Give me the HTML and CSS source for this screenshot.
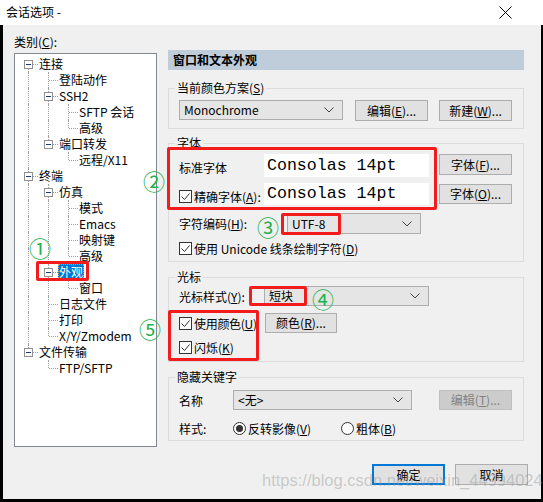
FILE: index.html
```html
<!DOCTYPE html>
<html lang="zh-CN">
<head>
<meta charset="utf-8">
<title>会话选项</title>
<link rel="stylesheet" href="styles.css">
</head>
<body>
<div class="win">
  <div class="titlebar">
    <span class="title">会话选项 -</span>
    <svg class="close" width="13" height="13" viewBox="0 0 13 13"><path d="M0.5 0.5 L12.5 12.5 M12.5 0.5 L0.5 12.5" stroke="#000" stroke-width="1" fill="none"/></svg>
  </div>
  <div class="body">
    <div class="left">
      <div class="cat">类别(<u>C</u>):</div>
      <div class="tree">
        <div class="row"><span class="g f"><i class="bx"></i></span><span class="tx">连接</span></div>
        <div class="row"><span class="g v"></span><span class="g t"></span><span class="tx">登陆动作</span></div>
        <div class="row"><span class="g v"></span><span class="g t"><i class="bx"></i></span><span class="tx">SSH2</span></div>
        <div class="row"><span class="g v"></span><span class="g v"></span><span class="g t"></span><span class="tx">SFTP 会话</span></div>
        <div class="row"><span class="g v"></span><span class="g v"></span><span class="g l"></span><span class="tx">高级</span></div>
        <div class="row"><span class="g v"></span><span class="g l"><i class="bx"></i></span><span class="tx">端口转发</span></div>
        <div class="row"><span class="g v"></span><span class="g"></span><span class="g l"></span><span class="tx">远程/X11</span></div>
        <div class="row"><span class="g t"><i class="bx"></i></span><span class="tx">终端</span></div>
        <div class="row"><span class="g v"></span><span class="g t"><i class="bx"></i></span><span class="tx">仿真</span></div>
        <div class="row"><span class="g v"></span><span class="g v"></span><span class="g t"></span><span class="tx">模式</span></div>
        <div class="row"><span class="g v"></span><span class="g v"></span><span class="g t"></span><span class="tx">Emacs</span></div>
        <div class="row"><span class="g v"></span><span class="g v"></span><span class="g t"></span><span class="tx">映射键</span></div>
        <div class="row"><span class="g v"></span><span class="g v"></span><span class="g l"></span><span class="tx">高级</span></div>
        <div class="row"><span class="g v"></span><span class="g t"><i class="bx"></i></span><span class="tx sel">外观</span></div>
        <div class="row"><span class="g v"></span><span class="g v"></span><span class="g l"></span><span class="tx">窗口</span></div>
        <div class="row"><span class="g v"></span><span class="g t"></span><span class="tx">日志文件</span></div>
        <div class="row"><span class="g v"></span><span class="g t"></span><span class="tx">打印</span></div>
        <div class="row"><span class="g v"></span><span class="g l"></span><span class="tx">X/Y/Zmodem</span></div>
        <div class="row"><span class="g l"><i class="bx"></i></span><span class="tx">文件传输</span></div>
        <div class="row"><span class="g"></span><span class="g l"></span><span class="tx">FTP/SFTP</span></div>
      </div>
    </div>

    <div class="right">
      <div class="hdr">窗口和文本外观</div>

      <fieldset class="grp g1">
        <legend>当前颜色方案(<u>S</u>)</legend>
        <div class="r1">
          <div class="sel-box w164"><span>Monochrome</span><svg class="chev" width="10" height="6" viewBox="0 0 10 6"><path d="M0.5 0.5 L5 5 L9.5 0.5" stroke="#444" fill="none"/></svg></div>
          <div class="btn">编辑(<u>E</u>)...</div>
          <div class="btn">新建(<u>W</u>)...</div>
        </div>
      </fieldset>

      <fieldset class="grp g2">
        <legend>字体</legend>
        <div class="frow fr1">
          <span class="lab">标准字体</span>
          <div class="field">Consolas 14pt</div>
          <div class="btn">字体(<u>F</u>)...</div>
        </div>
        <div class="frow fr2">
          <span class="lab chk"><span class="cb"><svg width="11" height="11" viewBox="0 0 11 11"><path d="M1.5 5.5 L4.5 8.5 L9.5 2.5" stroke="#333" fill="none"/></svg></span>精确字体(<u>A</u>):</span>
          <div class="field">Consolas 14pt</div>
          <div class="btn">字体(<u>O</u>)...</div>
        </div>
        <div class="frow fr3">
          <span class="lab wide">字符编码(<u>H</u>):</span>
          <div class="sel-box w133"><span>UTF-8</span><svg class="chev" width="10" height="6" viewBox="0 0 10 6"><path d="M0.5 0.5 L5 5 L9.5 0.5" stroke="#444" fill="none"/></svg></div>
        </div>
        <div class="frow fr4">
          <span class="chk"><span class="cb"><svg width="11" height="11" viewBox="0 0 11 11"><path d="M1.5 5.5 L4.5 8.5 L9.5 2.5" stroke="#333" fill="none"/></svg></span>使用 Unicode 线条绘制字符(<u>D</u>)</span>
        </div>
      </fieldset>

      <fieldset class="grp g3">
        <legend>光标</legend>
        <div class="frow cr1">
          <span class="lab">光标样式(<u>Y</u>):</span>
          <div class="sel-box w165"><span>短块</span><svg class="chev" width="10" height="6" viewBox="0 0 10 6"><path d="M0.5 0.5 L5 5 L9.5 0.5" stroke="#444" fill="none"/></svg></div>
        </div>
        <div class="frow cr2">
          <span class="lab chk"><span class="cb"><svg width="11" height="11" viewBox="0 0 11 11"><path d="M1.5 5.5 L4.5 8.5 L9.5 2.5" stroke="#333" fill="none"/></svg></span><span class="tight">使用颜色(<u>U</u>)</span></span>
          <div class="btn w72">颜色(<u>R</u>)...</div>
        </div>
        <div class="frow cr3">
          <span class="chk"><span class="cb"><svg width="11" height="11" viewBox="0 0 11 11"><path d="M1.5 5.5 L4.5 8.5 L9.5 2.5" stroke="#333" fill="none"/></svg></span>闪烁(<u>K</u>)</span>
        </div>
      </fieldset>

      <fieldset class="grp g4">
        <legend>隐藏关键字</legend>
        <div class="frow hr1">
          <span class="lab short">名称</span>
          <div class="sel-box w179"><span>&lt;无&gt;</span><svg class="chev" width="10" height="6" viewBox="0 0 10 6"><path d="M0.5 0.5 L5 5 L9.5 0.5" stroke="#444" fill="none"/></svg></div>
          <div class="btn dis">编辑(<u>T</u>)...</div>
        </div>
        <div class="frow hr2">
          <span class="lab short">样式:</span>
          <span class="radio on"><span class="rb"></span>反转影像(<u>V</u>)</span>
          <span class="radio"><span class="rb"></span>粗体(<u>B</u>)</span>
        </div>
      </fieldset>

      <div class="actions">
        <div class="btn def">确定</div>
        <div class="btn">取消</div>
      </div>
    </div>
  </div>

  <div class="mark rb1"></div>
  <div class="mark rb2"></div>
  <div class="mark rb3"></div>
  <div class="mark rb4"></div>
  <div class="mark rb5"></div>
  <span class="num n1">①</span>
  <span class="num n2">②</span>
  <span class="num n3">③</span>
  <span class="num n4">④</span>
  <span class="num n5">⑤</span>
  <span class="wm">https://blog.csdn.net/weixin_44994024</span>
</div>
</body>
</html>
```
FILE: styles.css
```css
* { box-sizing: border-box; }
html, body { margin: 0; padding: 0; }
body {
  width: 543px;
  height: 502px;
  overflow: hidden;
  font-family: "Noto Sans CJK SC", "Microsoft YaHei", sans-serif;
  font-size: 12px;
  color: #000;
  background: #000;
}
u { text-decoration: underline; text-underline-offset: 1px; }

.win { position: relative; width: 543px; height: 502px; }

.titlebar {
  height: 25px;
  background: #fff;
  display: flex;
  align-items: center;
  padding: 0 31px 0 6px;
  justify-content: space-between;
}
.title { line-height: 16px; margin-top: -1px; }
.close { display: block; margin-top: -1px; }

.body {
  display: flex;
  height: 474px;
  margin: 0 2px 0 3px;
  background: #f0f0f0;
}

.left { padding: 9px 0 0 11px; width: 154px; flex: none; }
.cat { line-height: 16px; height: 16px; margin-bottom: 3px; }
.tree {
  width: 143px;
  height: 394px;
  border: 1px solid #828790;
  background: #fff;
  padding: 2px 0 0 3px;
}
.row { display: flex; height: 16px; line-height: 16px; white-space: nowrap; }
.g { position: relative; width: 20px; height: 16px; flex: none; }
.g.v::before, .g.t::before, .g.l::before, .g.f::before {
  content: "";
  position: absolute;
  left: 10px;
  top: 0;
  height: 16px;
  border-left: 1px dotted #a0a0a0;
}
.g.l::before { height: 8px; }
.g.f::before { top: 8px; height: 8px; }
.g.t::after, .g.l::after, .g.f::after {
  content: "";
  position: absolute;
  left: 11px;
  top: 8px;
  width: 9px;
  border-top: 1px dotted #a0a0a0;
}
.bx {
  position: absolute;
  left: 6px;
  top: 4px;
  width: 9px;
  height: 9px;
  border: 1px solid #919191;
  background: #fff;
  z-index: 1;
}
.bx::after {
  content: "";
  position: absolute;
  left: 1px;
  top: 3px;
  width: 5px;
  height: 1px;
  background: #1a3a7a;
}
.tx { margin-left: 1px; color: #000; }
.tx.sel { background: #0078d7; color: #fff; padding: 0 1px; margin-left: 0; outline: 1px dotted #e0a060; outline-offset: -1px; }

.right { width: 356px; margin-left: 11px; padding-top: 25px; flex: none; }
.hdr {
  height: 20px;
  background: #bfcddb;
  font-weight: bold;
  line-height: 20px;
  padding-left: 5px;
}

.grp {
  margin: 0;
  border: 1px solid #dcdcdc;
  padding: 0 10px;
  min-width: 0;
}
.grp legend {
  padding: 0 2px;
  margin-left: -4px;
  line-height: 16px;
  height: 16px;
}
.g1 { margin-top: 10px; padding-top: 4px; padding-bottom: 7px; }
.g2 { margin-top: 6px; padding-top: 3px; padding-bottom: 4px; }
.g3 { margin-top: 7px; padding-top: 1px; padding-bottom: 5px; }
.g4 { margin-top: 7px; padding-top: 5px; padding-bottom: 3px; }

.r1 { display: flex; align-items: flex-start; gap: 0; }
.r1 .btn:nth-child(2) { margin-left: 12px; }
.r1 .btn:nth-child(3) { margin-left: 11px; }

.sel-box {
  height: 20px;
  background: #e5e5e5;
  border: 1px solid #adadad;
  display: flex;
  align-items: center;
  justify-content: space-between;
  padding: 0 8px 0 4px;
  line-height: 16px;
}
.w164 { width: 164px; }
.w133 { width: 134px; height: 21px; }
.w165 { width: 165px; }
.w179 { width: 179px; }
.chev { display: block; }

.btn {
  width: 73px;
  height: 21px;
  background: #e1e1e1;
  border: 1px solid #adadad;
  display: flex;
  align-items: center;
  justify-content: center;
  line-height: 16px;
  flex: none;
}
.btn.w72 { width: 72px; height: 20px; }
.btn.dis { background: #cccccc; border-color: #bfbfbf; color: #838383; height: 20px; margin-left: 27px; }
.btn.def { border: 2px solid #0078d7; }

.frow { display: flex; align-items: center; }
.lab { width: 85px; flex: none; display: flex; align-items: center; }
.lab.wide { width: 108px; }
.lab.short { width: 54px; }
.fr1 { height: 23px; align-items: flex-start; }
.fr1 .lab { height: 23px; padding-top: 3px; }
.fr1 .btn { margin-left: 10px; }
.fr2 { height: 22px; margin-top: 6px; }
.fr2 .btn { margin-left: 10px; height: 20px; }
.fr2 .lab { padding-top: 4px; }
.fr3 { height: 21px; margin-top: 8px; }
.fr4 { height: 18px; margin-top: 5px; }

.field {
  width: 165px;
  height: 23px;
  background: #fff;
  font-family: "Liberation Mono", "DejaVu Sans Mono", monospace;
  font-size: 16.6px;
  line-height: 23px;
  padding-left: 3px;
  flex: none;
}
.fr2 .field { height: 22px; line-height: 22px; }

.chk { display: flex; align-items: center; white-space: nowrap; }
.cb {
  width: 13px;
  height: 13px;
  border: 1px solid #333;
  background: #fff;
  margin-right: 2px;
  display: flex;
  align-items: center;
  justify-content: center;
  flex: none;
}
.cb svg { display: block; }
.tight { letter-spacing: -0.3px; }

.cr1 { height: 20px; }
.cr2 { height: 20px; margin-top: 7px; }
.cr2 .lab { width: 86px; }
.cr3 { height: 18px; margin-top: 5px; }

.hr1 { height: 20px; }
.hr2 { height: 18px; margin-top: 9px; }
.radio { display: flex; align-items: center; white-space: nowrap; width: 108px; }
.rb {
  width: 13px;
  height: 13px;
  border: 1px solid #333;
  border-radius: 50%;
  background: #fff;
  margin-right: 2px;
  position: relative;
  flex: none;
}
.radio.on .rb::after {
  content: "";
  position: absolute;
  left: 2px;
  top: 2px;
  width: 7px;
  height: 7px;
  border-radius: 50%;
  background: #333;
}

.actions {
  display: flex;
  justify-content: flex-end;
  gap: 10px;
  margin-top: 23px;
  margin-right: -4px;
}

.mark {
  position: absolute;
  border: 3px solid #f21c1c;
  border-radius: 2px;
}
.rb1 { left: 36px; top: 261px; width: 53px; height: 20px; }
.rb2 { left: 167px; top: 147px; width: 270px; height: 63px; }
.rb3 { left: 281px; top: 213px; width: 60px; height: 22px; }
.rb4 { left: 249px; top: 286px; width: 58px; height: 20px; }
.rb5 { left: 168px; top: 310px; width: 91px; height: 51px; }

.num {
  position: absolute;
  color: #22b14c;
  font-size: 22px;
  line-height: 22px;
  font-family: "Noto Sans CJK SC", sans-serif;
}
.n1 { left: 29px; top: 236px; }
.n2 { left: 143px; top: 169px; }
.n3 { left: 257px; top: 215px; }
.n4 { left: 312px; top: 287px; }
.n5 { left: 139px; top: 317px; }

.wm {
  position: absolute;
  left: 262px;
  top: 470px;
  font-family: "Liberation Sans", sans-serif;
  font-size: 16.5px;
  line-height: 20px;
  color: rgba(150, 150, 150, 0.45);
  white-space: nowrap;
}
```
